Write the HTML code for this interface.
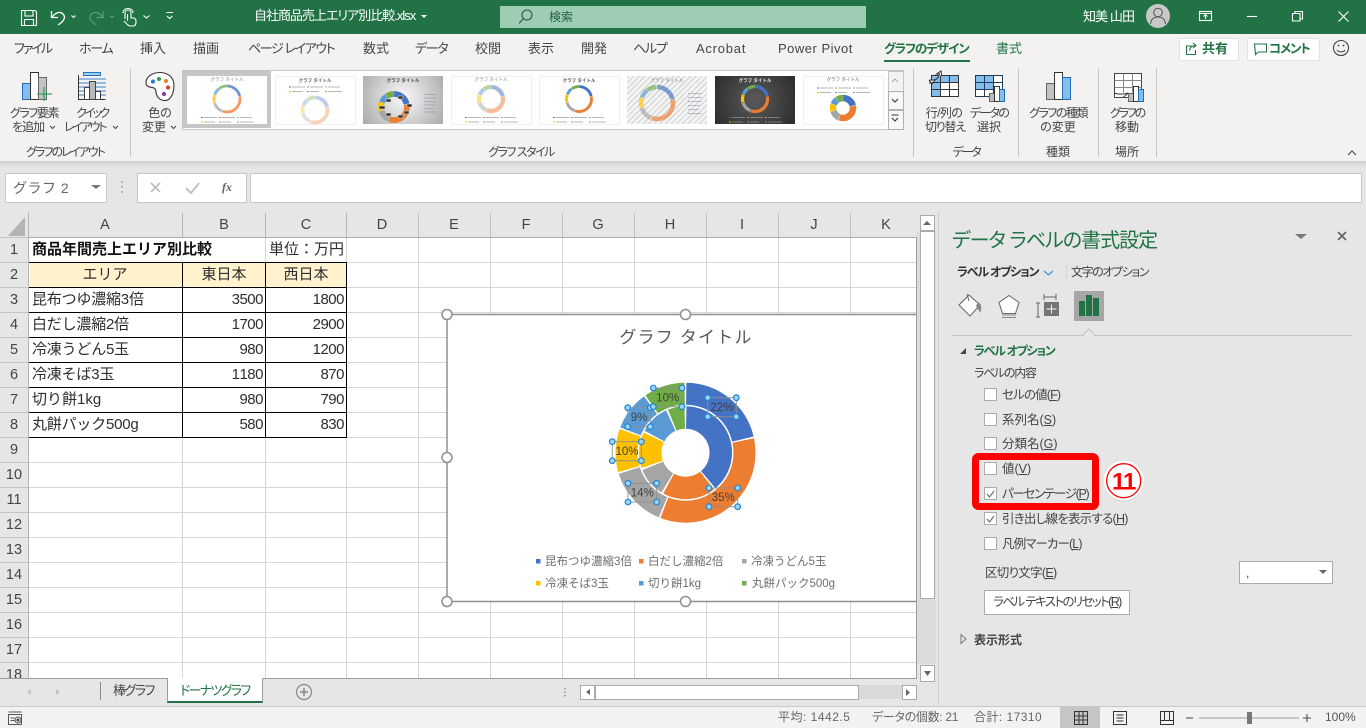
<!DOCTYPE html>
<html lang="ja"><head><meta charset="utf-8"><title>自社商品売上エリア別比較.xlsx - Excel</title>
<style>
html,body{margin:0;padding:0}
body{width:1366px;height:728px;overflow:hidden;position:relative;background:#fff;font-family:"Liberation Sans","Noto Sans CJK JP",sans-serif;color:#444}
.b{position:absolute}
.t{position:absolute;white-space:nowrap;line-height:16px;height:16px;font-size:12px;font-feature-settings:"palt";color:#444}
.c{transform:translateX(-50%)}
.tab{font-size:13px;top:41px}
.w{color:#fff}
.cell{font-size:15px;color:#2e2e2e;font-feature-settings:normal}
.n{font-size:15px;color:#2e2e2e;font-feature-settings:normal;letter-spacing:-.5px;text-align:right;font-kerning:none}
.h{font-size:14.5px;color:#444;font-feature-settings:normal;transform:translateX(-50%)}
.g{color:#217346}
.p{font-size:12.5px;left:1002px}
u{text-underline-offset:1px}
svg{position:absolute;left:0;top:0}
</style></head><body>
<!-- backgrounds -->
<div class="b" style="left:0;top:0;width:1366px;height:34px;background:#217346"></div>
<div class="b" style="left:500px;top:6px;width:366px;height:22px;background:#9fcdb3"></div>
<div class="b" style="left:0;top:34px;width:1366px;height:127px;background:#f3f2f1"></div>
<div class="b" style="left:0;top:161px;width:1366px;height:51px;background:linear-gradient(#cfcfcf,#e6e6e6 7px)"></div>
<div class="b" style="left:5px;top:173px;width:100px;height:28px;background:#fff;border:1px solid #c6c6c6"></div>
<div class="b" style="left:137px;top:173px;width:108px;height:28px;background:#fff;border:1px solid #c6c6c6"></div>
<div class="b" style="left:250px;top:173px;width:1110px;height:28px;background:#fff;border:1px solid #c6c6c6"></div>
<div class="b" style="left:0;top:212px;width:917px;height:25px;background:#e6e6e6;border-bottom:0"></div>
<div class="b" style="left:0;top:237px;width:28px;height:441px;background:#e6e6e6"></div>
<!-- sheet grid -->
<div class="b" style="left:29px;top:237px;width:887px;height:441px;background:repeating-linear-gradient(to bottom,#d6d6d6 0 1px,#fff 1px 25px)"></div>
<div class="b" style="left:182px;top:262px;width:1px;height:416px;background:#d6d6d6"></div>
<div class="b" style="left:265px;top:237px;width:1px;height:441px;background:#d6d6d6"></div>
<div class="b" style="left:346px;top:237px;width:1px;height:441px;background:#d6d6d6"></div>
<div class="b" style="left:418px;top:237px;width:1px;height:441px;background:#d6d6d6"></div>
<div class="b" style="left:490px;top:237px;width:1px;height:441px;background:#d6d6d6"></div>
<div class="b" style="left:562px;top:237px;width:1px;height:441px;background:#d6d6d6"></div>
<div class="b" style="left:634px;top:237px;width:1px;height:441px;background:#d6d6d6"></div>
<div class="b" style="left:706px;top:237px;width:1px;height:441px;background:#d6d6d6"></div>
<div class="b" style="left:778px;top:237px;width:1px;height:441px;background:#d6d6d6"></div>
<div class="b" style="left:850px;top:237px;width:1px;height:441px;background:#d6d6d6"></div>
<div class="b" style="left:916px;top:237px;width:1px;height:441px;background:#9c9c9c"></div>
<div class="b" style="left:30px;top:263px;width:316px;height:24px;background:#fff2cc"></div>
<!-- header separators -->
<div class="b" style="left:28px;top:212px;width:1px;height:466px;background:#b5b5b5"></div>
<div class="b" style="left:29px;top:237px;width:888px;height:1px;background:#ababab"></div>
<div class="b" style="left:182px;top:213px;width:1px;height:24px;background:#b5b5b5"></div>
<div class="b" style="left:265px;top:213px;width:1px;height:24px;background:#b5b5b5"></div>
<div class="b" style="left:346px;top:213px;width:1px;height:24px;background:#b5b5b5"></div>
<div class="b" style="left:418px;top:213px;width:1px;height:24px;background:#c2c2c2"></div>
<div class="b" style="left:490px;top:213px;width:1px;height:24px;background:#c2c2c2"></div>
<div class="b" style="left:562px;top:213px;width:1px;height:24px;background:#c2c2c2"></div>
<div class="b" style="left:634px;top:213px;width:1px;height:24px;background:#c2c2c2"></div>
<div class="b" style="left:706px;top:213px;width:1px;height:24px;background:#c2c2c2"></div>
<div class="b" style="left:778px;top:213px;width:1px;height:24px;background:#c2c2c2"></div>
<div class="b" style="left:850px;top:213px;width:1px;height:24px;background:#c2c2c2"></div>
<!-- row separators in header -->
<div class="b" style="left:0;top:237px;width:28px;height:441px;background:repeating-linear-gradient(to bottom,#c4c4c4 0 1px,transparent 1px 25px)"></div>
<!-- black borders -->
<div class="b" style="left:29px;top:262px;width:318px;height:176px;background:repeating-linear-gradient(to bottom,#000 0 1px,transparent 1px 25px)"></div>
<div class="b" style="left:182px;top:262px;width:1px;height:176px;background:#000"></div>
<div class="b" style="left:265px;top:262px;width:1px;height:176px;background:#000"></div>
<div class="b" style="left:346px;top:262px;width:1px;height:176px;background:#000"></div>
<!-- scrollbars, tabs, status -->
<div class="b" style="left:917px;top:212px;width:21px;height:495px;background:#e6e6e6"></div>
<div class="b" style="left:917px;top:231px;width:19px;height:433px;background:#dcdcdc"></div>
<div class="b" style="left:920px;top:215px;width:13px;height:14px;background:#fff;border:1px solid #ababab"></div>
<div class="b" style="left:920px;top:231px;width:13px;height:366px;background:#fff;border:1px solid #ababab"></div>
<div class="b" style="left:920px;top:665px;width:13px;height:15px;background:#fff;border:1px solid #ababab"></div>
<div class="b" style="left:0;top:678px;width:917px;height:29px;background:#e6e6e6;border-top:1px solid #9c9c9c;box-sizing:border-box"></div>
<div class="b" style="left:938px;top:212px;width:428px;height:495px;background:#e6e6e6;border-left:1px solid #cfcfcf;box-sizing:border-box"></div>
<div class="b" style="left:167px;top:678px;width:96px;height:25px;background:#fff;border-left:1px solid #9c9c9c;border-right:1px solid #9c9c9c;border-bottom:2px solid #217346;box-sizing:border-box"></div>
<div class="b" style="left:100px;top:682px;width:1px;height:18px;background:#8a8a8a"></div>
<div class="b" style="left:580px;top:685px;width:335px;height:14px;background:#d9d9d9"></div>
<div class="b" style="left:580px;top:685px;width:13px;height:13px;background:#fff;border:1px solid #ababab"></div>
<div class="b" style="left:595px;top:685px;width:262px;height:13px;background:#fff;border:1px solid #ababab"></div>
<div class="b" style="left:902px;top:685px;width:13px;height:13px;background:#fff;border:1px solid #ababab"></div>
<div class="b" style="left:0;top:706px;width:1366px;height:22px;background:#f3f2f1;border-top:1px solid #c8c8c8;box-sizing:border-box"></div>
<div class="b" style="left:1060px;top:707px;width:40px;height:21px;background:#c6c5c3"></div>
<!-- gallery -->
<div class="b" style="left:182px;top:70px;width:720px;height:58px;background:#fff;border:1px solid #c6c6c6"></div>
<div class="b" style="left:888px;top:71px;width:14px;height:19px;background:#f3f2f1;border:1px solid #c6c6c6"></div>
<div class="b" style="left:888px;top:91px;width:14px;height:17px;background:#f8f8f8;border:1px solid #b0b0b0"></div>
<div class="b" style="left:888px;top:110px;width:14px;height:18px;background:#f8f8f8;border:1px solid #b0b0b0"></div>
<div class="b" style="left:182px;top:71px;width:89px;height:57px;background:#c6c6c6"></div>
<div class="b" style="left:187px;top:76px;width:80px;height:48px;background:#fff"></div>
<div class="b" style="left:363px;top:76px;width:80px;height:48px;background:radial-gradient(circle at 50% 45%,#fafafa,#a9a9a9)"></div>
<div class="b" style="left:715px;top:76px;width:80px;height:48px;background:radial-gradient(circle at 50% 50%,#5a5a5a,#2c2c2c)"></div>
<div class="b" style="left:627px;top:76px;width:80px;height:48px;background:repeating-linear-gradient(135deg,#dedede 0 2px,#f7f7f7 2px 4px)"></div>
<!-- share buttons -->
<div class="b" style="left:1179px;top:38px;width:58px;height:21px;background:#fff;border:1px solid #e2e2e2;border-radius:2px"></div>
<div class="b" style="left:1247px;top:38px;width:71px;height:21px;background:#fff;border:1px solid #e2e2e2;border-radius:2px"></div>
<!-- pane widgets -->
<div class="b" style="left:1074px;top:291px;width:30px;height:30px;background:#a6a6a6"></div>
<div class="b" style="left:952px;top:335px;width:400px;height:1px;background:#c4c4c4"></div>
<div class="b" style="left:1239px;top:561px;width:92px;height:21px;background:#fff;border:1px solid #ababab"></div>
<div class="b" style="left:984px;top:590px;width:144px;height:23px;background:#fff;border:1px solid #ababab"></div>

<!-- title text -->
<div class="t w" style="left:254px;top:8px;font-size:13px;letter-spacing:-1px">自社商品売上エリア別比較.xlsx</div>
<div class="t" style="left:549px;top:9px;font-size:12px;color:#1d5f3b">検索</div>
<div class="t w" style="left:1083px;top:9px;font-size:13px;letter-spacing:-.9px">知美 山田</div>
<!-- tabs -->
<div class="t tab" style="left:14px;letter-spacing:-2px">ファイル</div>
<div class="t tab" style="left:79px;letter-spacing:-1.300px">ホーム</div>
<div class="t tab" style="left:140px">挿入</div>
<div class="t tab" style="left:193px">描画</div>
<div class="t tab" style="left:248px;letter-spacing:-1.400px">ページ レイアウト</div>
<div class="t tab" style="left:363px">数式</div>
<div class="t tab" style="left:415px;letter-spacing:-1.300px">データ</div>
<div class="t tab" style="left:475px">校閲</div>
<div class="t tab" style="left:528px">表示</div>
<div class="t tab" style="left:581px">開発</div>
<div class="t tab" style="left:633px;letter-spacing:-1.300px">ヘルプ</div>
<div class="t tab" style="left:696px;letter-spacing:.75px">Acrobat</div>
<div class="t tab" style="left:778px;letter-spacing:.5px">Power Pivot</div>
<div class="t tab g" style="left:884px;font-weight:700;font-size:12.5px;letter-spacing:-1.100px">グラフのデザイン</div>
<div class="b" style="left:884px;top:60px;width:86px;height:2px;background:#217346"></div>
<div class="t tab g" style="left:996px">書式</div>
<div class="t g" style="left:1202px;top:41px;font-size:13px;font-weight:700">共有</div>
<div class="t g" style="left:1269px;top:41px;font-size:12.5px;font-weight:700;letter-spacing:-1.200px">コメント</div>
<!-- ribbon labels -->
<div class="t c" style="left:34px;top:105px;letter-spacing:-1.400px">グラフ要素</div>
<div class="t" style="left:12px;top:119px;letter-spacing:-1px">を追加</div>
<div class="t c" style="left:92px;top:105px;letter-spacing:-2.500px">クイック</div>
<div class="t" style="left:64px;top:119px;letter-spacing:-2.200px">レイアウト</div>
<div class="t c" style="left:160px;top:105px">色の</div>
<div class="t" style="left:142px;top:119px">変更</div>
<div class="t c" style="left:65px;top:144px;letter-spacing:-1.900px">グラフのレイアウト</div>
<div class="t c" style="left:521px;top:144px;letter-spacing:-1.500px">グラフ スタイル</div>
<div class="t c" style="left:944px;top:105px;letter-spacing:-.6px">行/列の</div>
<div class="t c" style="left:945px;top:119px;letter-spacing:-1.200px">切り替え</div>
<div class="t c" style="left:989px;top:105px;letter-spacing:-1.700px">データの</div>
<div class="t c" style="left:989px;top:119px">選択</div>
<div class="t c" style="left:1058px;top:105px;letter-spacing:-1.500px">グラフの種類</div>
<div class="t c" style="left:1058px;top:119px">の変更</div>
<div class="t c" style="left:1127px;top:105px;letter-spacing:-2.200px">グラフの</div>
<div class="t c" style="left:1127px;top:119px">移動</div>
<div class="t c" style="left:966px;top:144px;letter-spacing:-2.300px">データ</div>
<div class="t c" style="left:1058px;top:144px">種類</div>
<div class="t c" style="left:1127px;top:144px">場所</div>
<div class="t" style="left:13px;top:180px;font-size:14px;color:#666;font-feature-settings:normal;letter-spacing:.5px">グラフ 2</div>
<!-- column headers -->
<div class="t h" style="left:105px;top:217px">A</div><div class="t h" style="left:224px;top:217px">B</div><div class="t h" style="left:306px;top:217px">C</div><div class="t h" style="left:382px;top:217px">D</div><div class="t h" style="left:454px;top:217px">E</div><div class="t h" style="left:526px;top:217px">F</div><div class="t h" style="left:598px;top:217px">G</div><div class="t h" style="left:670px;top:217px">H</div><div class="t h" style="left:742px;top:217px">I</div><div class="t h" style="left:814px;top:217px">J</div><div class="t h" style="left:886px;top:217px">K</div>
<!-- row headers -->
<div class="t h" style="left:14px;top:242px">1</div><div class="t h" style="left:14px;top:267px">2</div><div class="t h" style="left:14px;top:292px">3</div><div class="t h" style="left:14px;top:317px">4</div><div class="t h" style="left:14px;top:342px">5</div><div class="t h" style="left:14px;top:367px">6</div><div class="t h" style="left:14px;top:392px">7</div><div class="t h" style="left:14px;top:417px">8</div><div class="t h" style="left:14px;top:442px">9</div><div class="t h" style="left:14px;top:467px">10</div><div class="t h" style="left:14px;top:492px">11</div><div class="t h" style="left:14px;top:517px">12</div><div class="t h" style="left:14px;top:542px">13</div><div class="t h" style="left:14px;top:567px">14</div><div class="t h" style="left:14px;top:592px">15</div><div class="t h" style="left:14px;top:617px">16</div><div class="t h" style="left:14px;top:642px">17</div>
<div class="b" style="left:0;top:662px;width:28px;height:16px;overflow:hidden"><div class="t h" style="left:14px;top:5px">18</div></div>
<!-- cells -->
<div class="t cell" style="left:32px;top:242px;font-weight:700;color:#111">商品年間売上エリア別比較</div>
<div class="t cell" style="left:269px;top:242px">単位：万円</div>
<div class="t cell c" style="left:105px;top:267px">エリア</div>
<div class="t cell c" style="left:224px;top:267px">東日本</div>
<div class="t cell c" style="left:306px;top:267px">西日本</div>
<div class="t cell" style="left:32px;top:292px;letter-spacing:-.2px">昆布つゆ濃縮3倍</div>
<div class="t cell" style="left:32px;top:317px;letter-spacing:-.2px">白だし濃縮2倍</div>
<div class="t cell" style="left:32px;top:342px;letter-spacing:-.2px">冷凍うどん5玉</div>
<div class="t cell" style="left:32px;top:367px;letter-spacing:-.2px">冷凍そば3玉</div>
<div class="t cell" style="left:32px;top:392px">切り餅1kg</div>
<div class="t cell" style="left:32px;top:417px;letter-spacing:-.2px">丸餅パック500g</div>
<div class="t n" style="right:1103px;top:292px">3500</div><div class="t n" style="right:1022px;top:292px">1800</div>
<div class="t n" style="right:1103px;top:317px">1700</div><div class="t n" style="right:1022px;top:317px">2900</div>
<div class="t n" style="right:1103px;top:342px">980</div><div class="t n" style="right:1022px;top:342px">1200</div>
<div class="t n" style="right:1103px;top:367px">1180</div><div class="t n" style="right:1022px;top:367px">870</div>
<div class="t n" style="right:1103px;top:392px">980</div><div class="t n" style="right:1022px;top:392px">790</div>
<div class="t n" style="right:1103px;top:417px">580</div><div class="t n" style="right:1022px;top:417px">830</div>
<!-- sheet tabs -->
<div class="t" style="left:113px;top:683px;font-size:13px;letter-spacing:-1.500px">棒グラフ</div>
<div class="t" style="left:180px;top:683px;font-size:13px;color:#217346;letter-spacing:-1.700px">ドーナツグラフ</div>
<!-- status -->
<div class="t" style="left:778px;top:709px;color:#666;letter-spacing:.5px">平均: 1442.5</div>
<div class="t" style="left:872px;top:709px;color:#666;letter-spacing:-.3px">データの個数: 21</div>
<div class="t" style="left:974px;top:709px;color:#666;letter-spacing:.45px">合計: 17310</div>
<div class="t" style="left:1325px;top:709px;color:#555">100%</div>
<!-- pane text -->
<div class="t g" style="left:952px;top:233px;font-size:20px;font-weight:400;letter-spacing:-1px">データ ラベルの書式設定</div>
<div class="t" style="left:957px;top:264px;font-weight:700;color:#333;letter-spacing:-1.200px">ラベル オプション</div>
<div class="t" style="left:1071px;top:264px;color:#444;letter-spacing:-1.400px">文字のオプション</div>
<div class="t g" style="left:974px;top:343px;font-weight:700;letter-spacing:-1.300px">ラベル オプション</div>
<div class="t" style="left:974px;top:365px;letter-spacing:-1.300px">ラベルの内容</div>
<div class="t p" style="top:387px;letter-spacing:-.85px">セルの値(<u>F</u>)</div>
<div class="t p" style="top:412px">系列名(<u>S</u>)</div>
<div class="t p" style="top:436px">分類名(<u>G</u>)</div>
<div class="t p" style="top:461px">値(<u>V</u>)</div>
<div class="t p" style="top:486px;letter-spacing:-1.300px">パーセンテージ(<u>P</u>)</div>
<div class="t p" style="top:511px;letter-spacing:-.75px">引き出し線を表示する(<u>H</u>)</div>
<div class="t p" style="top:536px;letter-spacing:-.9px">凡例マーカー(<u>L</u>)</div>
<div class="t" style="left:985px;top:565px;font-size:12.5px;letter-spacing:-.7px">区切り文字(<u>E</u>)</div>
<div class="t" style="left:1246px;top:565px;font-size:12px">,</div>
<div class="t" style="left:993px;top:594px;font-size:12.5px;letter-spacing:-1.600px">ラベル テキストのリセット(<u>R</u>)</div>
<div class="t" style="left:974px;top:632px;font-weight:700">表示形式</div>

<svg width="1366" height="728" viewBox="0 0 1366 728" xmlns="http://www.w3.org/2000/svg" font-family="'Liberation Sans','Noto Sans CJK JP',sans-serif">
<defs>
<g id="rg" fill="none" transform="rotate(-90)">
<circle r="10" pathLength="100" stroke="#4472c4" stroke-dasharray="21 100" stroke-dashoffset="-.2"/>
<circle r="10" pathLength="100" stroke="#ed7d31" stroke-dasharray="34 100" stroke-dashoffset="-21.7"/>
<circle r="10" pathLength="100" stroke="#a5a5a5" stroke-dasharray="13.8 100" stroke-dashoffset="-56.3"/>
<circle r="10" pathLength="100" stroke="#ffc000" stroke-dasharray="10 100" stroke-dashoffset="-70.6"/>
<circle r="10" pathLength="100" stroke="#5b9bd5" stroke-dasharray="9 100" stroke-dashoffset="-81"/>
<circle r="10" pathLength="100" stroke="#70ad47" stroke-dasharray="9.5 100" stroke-dashoffset="-90.4"/>
</g>
<g id="lg">
<path d="M0 0h2" stroke="#4472c4"/><path d="M3 0h13" stroke="#999" stroke-width=".7"/>
<path d="M18 0h2" stroke="#ed7d31"/><path d="M21 0h13" stroke="#999" stroke-width=".7"/>
<path d="M36 0h2" stroke="#a5a5a5"/><path d="M39 0h12" stroke="#999" stroke-width=".7"/>
<path d="M0 4.500h2" stroke="#ffc000"/><path d="M3 4.500h11" stroke="#999" stroke-width=".7"/>
<path d="M18 4.500h2" stroke="#5b9bd5"/><path d="M21 4.500h9" stroke="#999" stroke-width=".7"/>
<path d="M36 4.500h2" stroke="#70ad47"/><path d="M39 4.500h14" stroke="#999" stroke-width=".7"/>
</g>
<g id="lv">
<path d="M0 0h2M0 5h2M0 10h2M0 15h2M0 20h2M0 25h2" stroke="#6a8fc8"/>
<path d="M3 0h14M3 5h14M3 10h14M3 15h12M3 20h10M3 25h14" stroke="#888" stroke-width=".7"/>
</g>
<g id="hd" fill="#9fd3f2" stroke="#1f86d1" stroke-width="1.200"><circle r="2.800"/></g>
</defs>

<!-- QAT -->
<g fill="none" stroke="#fff" stroke-width="1.100">
<path d="M21.500 10.500h13.500l1.500 1.500v13.500h-15z"/><path d="M25 10.500v5.500h8v-5.500M24.500 25.500v-6h9v6"/>
<path d="M51.500 11v6.500h6.500" stroke-width="1.300"/><path d="M52 17.500c3-5 8-6.500 11-3.500 3 3 1.500 7-5 11" stroke-width="1.300"/>
<path d="M71.500 15.500l2 2 2-2"/><path d="M143.500 15.500l3 2.500 3-2.500"/><path d="M166.500 12.500h6.500M167 16l2.700 2.500 2.700-2.500"/>
<path d="M125 19v-6c0-4 6-4 6 0v5h2c3 0 3 2 3 4 0 3-1 4-3 4h-3c-2 0-4-3-6-5"/><path d="M127.500 14v7"/><path d="M123 13c0-6 10-6 10 0"/>
</g>
<g fill="none" stroke="#5e9a7b" stroke-width="1.200"><path d="M103 11v6.500h-6.500M102.500 17.500c-3-5-8-6.500-11-3.500-3 3-1.500 7 5 11"/><path d="M110 15.500l2 2 2-2"/></g>
<path d="M421 15h6l-3 3z" fill="#fff"/>
<!-- search -->
<g fill="none" stroke="#1d5f3b" stroke-width="1.100"><circle cx="527" cy="15" r="5"/><path d="M523.500 18.500l-4.500 5"/></g>
<!-- window controls -->
<circle cx="1158" cy="16" r="12" fill="#c8c8c8"/>
<g fill="none" stroke="#555" stroke-width="1"><circle cx="1158" cy="12.500" r="4.300"/><path d="M1150.500 24c.5-5 3-7 7.500-7s7 2 7.500 7"/></g>
<g fill="none" stroke="#fff" stroke-width="1.100"><rect x="1199.500" y="11.500" width="12" height="9"/><path d="M1199.500 13.500h12M1205.500 19v-4M1203.500 16.500l2-2 2 2"/>
<path d="M1247 16.500h10"/><path d="M1292.500 13.500h7.500v7.500h-7.500zM1295 13.500v-2h7.500v7.500H1300"/><path d="M1338.500 11.500l10 10M1348.500 11.500l-10 10" stroke-width="1.200"/></g>
<!-- share icons -->
<g fill="none" stroke="#217346" stroke-width="1.100"><path d="M1192 46h-5.500v8.500h9V50"/><path d="M1189.500 50.500c.5-4 3-5 6.500-5M1193 43l3 2.500-3 2.500"/><path d="M1254.500 44h12v8h-8.500l-2.500 2.500z"/></g>
<g fill="none" stroke="#444" stroke-width="1.100"><circle cx="1341" cy="48" r="7.500"/><path d="M1337 50c1.500 2.500 6.500 2.500 8 0"/></g><circle cx="1338.500" cy="45.500" r=".9" fill="#444"/><circle cx="1343.500" cy="45.500" r=".9" fill="#444"/>
<!-- group separators -->
<path d="M130.500 68v89M913.500 68v89M1018.500 68v89M1098.500 68v89M1156.500 68v89" stroke="#c8c6c4"/>
<path d="M1348 155l4-4 4 4" fill="none" stroke="#444" stroke-width="1.100"/>
<!-- graph element -->
<rect x="22.500" y="83.500" width="8" height="16" fill="#85bdee" stroke="#1f6fb5"/>
<rect x="30.500" y="72.500" width="8" height="27" fill="#fff" stroke="#333"/>
<rect x="38.500" y="77.500" width="8" height="22" fill="#c3c3c3" stroke="#666"/>
<path d="M44 87v14M37 94h15" stroke="#2ea55a" stroke-width="1.300"/>
<!-- quick layout -->
<rect x="83.500" y="72.500" width="17" height="3" fill="#9ed0f0" stroke="#2273c0"/>
<path d="M79 79h27M79 83h27M79 87h27M79 91h27M79 95h27" stroke="#3b83c4"/>
<path d="M78.500 75v24.500h27" fill="none" stroke="#333"/>
<rect x="84.500" y="87.500" width="5" height="12" fill="#fff" stroke="#444"/><rect x="89.500" y="81.500" width="6" height="18" fill="#b9b9b9" stroke="#444"/><rect x="95.500" y="91.500" width="5" height="8" fill="#fff" stroke="#444"/>
<path d="M113 126l2.500 2.500 2.500-2.500" fill="none" stroke="#444"/>
<path d="M50 126l2.500 2.500 2.500-2.500" fill="none" stroke="#444"/>
<path d="M171 126l2.500 2.500 2.500-2.500" fill="none" stroke="#444"/>
<!-- palette -->
<path d="M160 72.500c-8 0-14 4.500-14 10 0 5 5 4.500 8 5.500 3 1.500 1 5 3.500 8.500 2.500 4 7.500 5 11 3 4-3 5.500-9 5.500-14 0-8-6-13-14-13z" fill="#fff" stroke="#333" stroke-width="1.100"/>
<circle cx="153" cy="81.500" r="2.100" fill="#2a7fd0"/><circle cx="159" cy="79" r="2.100" fill="#2fa24f"/><circle cx="166" cy="81" r="2.100" fill="#ed7d31"/><circle cx="168" cy="87.500" r="2.100" fill="#e03c31"/><circle cx="164" cy="94" r="2.100" fill="#8e3ba8"/>
<!-- gallery thumbs -->
<path d="M275.500 76.500h80v48h-80zM451.500 76.500h80v48h-80zM539.500 76.500h80v48h-80zM803.500 76.500h80v48h-80z" fill="none" stroke="#f0f0f0"/>
<g font-size="4.500" text-anchor="middle" fill="#8a8a8a">
<text x="227" y="81">グラフ タイトル</text><text x="315" y="82" font-weight="700" fill="#666">グラフ タイトル</text><text x="403" y="82" font-weight="700" fill="#444">グラフ タイトル</text><text x="491" y="81">グラフ タイトル</text><text x="579" y="82" font-weight="700" fill="#555">グラフ タイトル</text><text x="667" y="82">グラフ タイトル</text><text x="755" y="82" font-weight="700" fill="#eee">グラフ タイトル</text><text x="843" y="81" fill="#666">グラフ タイトル</text>
</g>
<use href="#rg" transform="translate(227 99) scale(1.300)" stroke-width="2.200" opacity=".75"/>
<use href="#rg" transform="translate(315 110) scale(1.250)" stroke-width="3" opacity=".35"/>
<use href="#rg" transform="translate(394 107) scale(1.300)" stroke-width="4.500"/>
<use href="#rg" transform="translate(491 99) scale(1.200)" stroke-width="3.500" opacity=".5"/>
<use href="#rg" transform="translate(579 99) scale(1.250)" stroke-width="2.300"/>
<use href="#rg" transform="translate(657 103) scale(1.600)" stroke-width="2.800" opacity=".65"/>
<use href="#rg" transform="translate(755 99) scale(1.250)" stroke-width="2.600"/>
<use href="#rg" transform="translate(843 108) scale(1)" stroke-width="6.500"/>
<use href="#lg" transform="translate(201 117.500)"/><use href="#lg" transform="translate(289 87)"/><use href="#lv" transform="translate(424 94.500) scale(.72 .7)"/><use href="#lg" transform="translate(465 117.500)"/><use href="#lg" transform="translate(553 117.500)"/><use href="#lv" transform="translate(688 93.500) scale(.8 .8)"/><use href="#lg" transform="translate(729 117.500)"/><use href="#lg" transform="translate(817 88)"/>
<path d="M386 99h5v3h-5zM398 96h5v3h-5zM407 104h5v3h-5zM379 106h6v3h-6zM386 113h5v3h-5zM398 115h5v3h-5zM404 111h5v3h-5z" fill="#333" stroke="#eee" stroke-width=".5"/>
<path d="M892 82l3-3 3 3" fill="none" stroke="#aaa" stroke-width="1.100"/>
<path d="M892 99l3 3 3-3" fill="none" stroke="#333" stroke-width="1.100"/>
<path d="M891.500 115h7M892 118l3 3 3-3" fill="none" stroke="#333" stroke-width="1.100"/>
<!-- switch row/col -->
<path d="M931.500 75.500h27v21h-27z" fill="#fff"/>
<path d="M931.500 75.500h27v7h-18v14h-9z" fill="#84bcec"/>
<path d="M931.500 75.500h27v21h-27zM931.500 82.500h27M931.500 89.500h27M940.500 75.500v21M949.500 75.500v21" fill="none" stroke="#333"/>
<path d="M930 84v-4l3.500 0c3 0 5-2 6-6h-3l4.500-3 .5 4" fill="#f3f2f1" stroke="#333"/>
<path d="M929 80l3 4 3-4" fill="none" stroke="#333"/>
<!-- data select -->
<path d="M975.500 75.500h27v21h-27z" fill="#fff"/><path d="M975.500 75.500h18v14h-18z" fill="#84bcec"/>
<path d="M975.500 75.500h27v21h-27zM975.500 82.500h27M975.500 89.500h27M984.500 75.500v21M993.500 75.500v21" fill="none" stroke="#1f3d5a"/>
<rect x="989.500" y="93.500" width="5" height="8" fill="#bdbdbd" stroke="#666"/><rect x="994.500" y="86.500" width="5" height="15" fill="#fff" stroke="#333"/><rect x="999.500" y="89.500" width="5" height="12" fill="#85bdee" stroke="#1f6fb5"/>
<!-- chart type -->
<rect x="1046.500" y="83.500" width="8" height="16" fill="#c3c3c3" stroke="#666"/><rect x="1054.500" y="72.500" width="8" height="27" fill="#fff" stroke="#333"/><rect x="1062.500" y="77.500" width="8" height="22" fill="#85bdee" stroke="#1f6fb5"/>
<!-- move chart -->
<path d="M1114.500 73.500h27v22l-6 2h-21z" fill="#fff" stroke="#444"/><path d="M1114.500 80.500h27M1114.500 87.500h27M1123.500 73.500v19M1132.500 73.500v19" stroke="#888" fill="none"/>
<path d="M1114.500 93c4 2 10 1 14 0l-5 4" fill="none" stroke="#333"/>
<rect x="1128.500" y="93.500" width="5" height="8" fill="#bdbdbd" stroke="#666"/><rect x="1133.500" y="86.500" width="5" height="15" fill="#fff" stroke="#333"/><rect x="1138.500" y="89.500" width="5" height="12" fill="#85bdee" stroke="#1f6fb5"/>
<!-- formula bar -->
<path d="M91 185h10l-5 4z" fill="#777"/>
<path d="M122 181v2M122 186v2M122 191v2" stroke="#999" stroke-width="1.300"/>
<path d="M151 183l9 9M160 183l-9 9" stroke="#bbb" stroke-width="1.600"/>
<path d="M186 188l5 5 8-10" fill="none" stroke="#bbb" stroke-width="1.800"/>
<text x="222" y="191" font-family="'Liberation Serif',serif" font-style="italic" font-weight="700" font-size="12" fill="#666">fx</text>
<!-- corner -->
<path d="M25 217v19h-17z" fill="#b4b4b4"/>
<!-- chart -->
<rect x="447" y="314.500" width="469" height="287" fill="#fff"/>
<path d="M916 314.500H447v287h469" fill="none" stroke="#8f8f8f" stroke-width="1.500"/>
<text x="686" y="343" font-size="17" text-anchor="middle" fill="#595959" letter-spacing="1.200">グラフ タイトル</text>
<g fill="none" transform="translate(685.500 452.700) rotate(-90)">
<g stroke-width="22">
<circle r="59" pathLength="100" stroke="#4472c4" stroke-dasharray="21.100 100" stroke-dashoffset="-.2"/>
<circle r="59" pathLength="100" stroke="#ed7d31" stroke-dasharray="34.200 100" stroke-dashoffset="-21.700"/>
<circle r="59" pathLength="100" stroke="#a5a5a5" stroke-dasharray="13.900 100" stroke-dashoffset="-56.300"/>
<circle r="59" pathLength="100" stroke="#ffc000" stroke-dasharray="10 100" stroke-dashoffset="-70.600"/>
<circle r="59" pathLength="100" stroke="#5b9bd5" stroke-dasharray="9 100" stroke-dashoffset="-81"/>
<circle r="59" pathLength="100" stroke="#70ad47" stroke-dasharray="9.500 100" stroke-dashoffset="-90.400"/>
</g>
<g stroke-width="22.500">
<circle r="35.250" pathLength="100" stroke="#4472c4" stroke-dasharray="38.500 100" stroke-dashoffset="-.35"/>
<circle r="35.250" pathLength="100" stroke="#ed7d31" stroke-dasharray="18.400 100" stroke-dashoffset="-39.550"/>
<circle r="35.250" pathLength="100" stroke="#a5a5a5" stroke-dasharray="10.300 100" stroke-dashoffset="-58.650"/>
<circle r="35.250" pathLength="100" stroke="#ffc000" stroke-dasharray="12.500 100" stroke-dashoffset="-69.650"/>
<circle r="35.250" pathLength="100" stroke="#5b9bd5" stroke-dasharray="10.300 100" stroke-dashoffset="-82.850"/>
<circle r="35.250" pathLength="100" stroke="#70ad47" stroke-dasharray="5.800 100" stroke-dashoffset="-93.850"/>
</g>
</g>
<g fill="none" stroke="#8f8f8f" stroke-width=".9">
<rect x="707.700" y="397.700" width="28.600" height="19"/><rect x="709" y="488" width="28.700" height="18.700"/><rect x="628" y="483.300" width="28.700" height="18.700"/><rect x="612.300" y="441.700" width="29" height="19"/><rect x="627.700" y="407.700" width="22.600" height="19"/><rect x="653.300" y="388" width="28.700" height="18.700"/>
</g>
<g font-size="11.500" fill="#404040" text-anchor="middle">
<text x="722" y="411">22%</text><text x="723.300" y="501">35%</text><text x="642.300" y="496.500">14%</text><text x="627" y="455">10%</text><text x="639" y="421">9%</text><text x="667.700" y="401.500">10%</text>
</g>
<use href="#hd" x="707.700" y="397.700"/><use href="#hd" x="736.300" y="397.700"/><use href="#hd" x="707.700" y="416.700"/><use href="#hd" x="736.300" y="416.700"/>
<use href="#hd" x="709" y="488"/><use href="#hd" x="737.700" y="488"/><use href="#hd" x="709" y="506.700"/><use href="#hd" x="737.700" y="506.700"/>
<use href="#hd" x="628" y="483.300"/><use href="#hd" x="656.700" y="483.300"/><use href="#hd" x="628" y="502"/><use href="#hd" x="656.700" y="502"/>
<use href="#hd" x="612.300" y="441.700"/><use href="#hd" x="641.300" y="441.700"/><use href="#hd" x="612.300" y="460.700"/><use href="#hd" x="641.300" y="460.700"/>
<use href="#hd" x="627.700" y="407.700"/><use href="#hd" x="650.300" y="407.700"/><use href="#hd" x="627.700" y="426.700"/><use href="#hd" x="650.300" y="426.700"/>
<use href="#hd" x="653.300" y="388"/><use href="#hd" x="682" y="388"/><use href="#hd" x="653.300" y="406.700"/><use href="#hd" x="682" y="406.700"/>
<!-- legend -->
<rect x="536" y="559" width="4.500" height="4.500" fill="#4472c4"/><rect x="639" y="559" width="4.500" height="4.500" fill="#ed7d31"/><rect x="742" y="559" width="4.500" height="4.500" fill="#a5a5a5"/>
<rect x="536" y="581" width="4.500" height="4.500" fill="#ffc000"/><rect x="639" y="581" width="4.500" height="4.500" fill="#5b9bd5"/><rect x="742" y="581" width="4.500" height="4.500" fill="#70ad47"/>
<g font-size="11.500" fill="#6e6e6e">
<text x="545" y="565">昆布つゆ濃縮3倍</text><text x="648" y="565">白だし濃縮2倍</text><text x="751" y="565">冷凍うどん5玉</text>
<text x="545" y="587">冷凍そば3玉</text><text x="648" y="587">切り餅1kg</text><text x="752" y="587">丸餅パック500g</text>
</g>
<g fill="#fff" stroke="#8f8f8f" stroke-width="1.500">
<circle cx="447" cy="314.500" r="5"/><circle cx="685.500" cy="314.500" r="5"/><circle cx="447" cy="457.500" r="5"/><circle cx="447" cy="601.500" r="5"/><circle cx="685.500" cy="601.500" r="5"/>
</g>
<!-- scrollbar arrows -->
<path d="M923 225l4-4 4 4z" fill="#666"/><path d="M924 671h7l-3.500 5z" fill="#666"/><path d="M590 689v6l-4-3z" fill="#666"/><path d="M906 689v7l4-3.500z" fill="#666"/>
<path d="M565 688v1.500M565 691.500v1.500M565 695v1.500" stroke="#888" stroke-width="1.300"/>
<path d="M31 689v6l-4-3z" fill="#c0c0c0"/><path d="M56 689v6l4-3z" fill="#c0c0c0"/>
<g fill="none" stroke="#8a8a8a" stroke-width="1.200"><circle cx="304" cy="692" r="7.500"/><path d="M300 692h8M304 688v8" stroke-width="1.600"/></g>
<!-- status icons -->
<g fill="none" stroke="#555"><path d="M8.500 712h13M8.500 714.500h13v10h-13zM10.500 718h4M10.500 720.500h4"/><circle cx="18" cy="720" r="3"/></g><circle cx="18" cy="720" r="1.500" fill="#444"/>
<g fill="none" stroke="#333"><path d="M1074.500 711.500h13v13h-13zM1074.500 716h13M1074.500 720h13M1079 711.500v13M1083 711.500v13"/><path d="M1113.500 711.500h13v13h-13zM1116.500 715h7M1116.500 718h7M1116.500 721h7"/><path d="M1160.500 711.500h13v13h-13zM1160.500 720.500h13M1164.500 711.500v9M1169.500 711.500v9"/></g>
<path d="M1199 718h100" stroke="#999" fill="none"/>
<path d="M1186 718h7M1303 718h8M1307 714v8" stroke="#444" fill="none"/>
<rect x="1247" y="712" width="5" height="12" fill="#777"/>
<!-- pane icons -->
<path d="M1295 234h12l-6 5z" fill="#777"/>
<path d="M1338 232l8 8M1346 232l-8 8" stroke="#666" stroke-width="1.800"/>
<path d="M1044 271l4.500 4 4.500-4" fill="none" stroke="#3a96dd" stroke-width="1.200"/>
<path d="M1066.500 265v14" stroke="#d0d0d0"/>
<path d="M969 295l11 10-10 11-11-11z" fill="#fff" stroke="#666"/><path d="M967 294l2 7" stroke="#666"/><path d="M978 302c4 2 4 7 2 11-1-3-3-5-4-7z" fill="#888"/>
<path d="M1009 295.500l10 7-3.500 11h-13l-3.500-11z" fill="#fff" stroke="#666"/><path d="M1002 315h14M1002 317.500h14" stroke="#888"/>
<path d="M1044 297h12M1044 294v6M1056 294v6M1038 303v14M1036 303h4M1036 317h4" stroke="#666" fill="none"/>
<rect x="1044" y="302" width="15" height="14" fill="#757575"/><path d="M1046.500 309h10M1051.500 304.500v9" stroke="#fff" stroke-width=".9"/>
<path d="M1079 301h6v15h-6zM1086 295h6v21h-6zM1093 298h6v18h-6z" fill="#217346"/>
<path d="M1083 335l6-6 6 6" fill="#e6e6e6" stroke="#c4c4c4"/><path d="M1084 335.500h10" stroke="#e6e6e6"/>
<path d="M960 354h6v-6z" fill="#444"/>
<path d="M961 634.500v9l5-4.500z" fill="#e6e6e6" stroke="#777"/>
<g fill="#fff" stroke="#ababab" stroke-width="1"><rect x="984.500" y="388.500" width="12" height="12"/><rect x="984.500" y="413.500" width="12" height="12"/><rect x="984.500" y="437.500" width="12" height="12"/><rect x="984.500" y="462.500" width="12" height="12"/><rect x="984.500" y="487.500" width="12" height="12"/><rect x="984.500" y="512.500" width="12" height="12"/><rect x="984.500" y="537.500" width="12" height="12"/></g>
<path d="M987 494l2.500 3 4.500-6M987 519l2.500 3 4.500-6" fill="none" stroke="#777" stroke-width="1.300"/>
<path d="M1319 570h8l-4 4z" fill="#666"/>
<!-- red highlight -->
<rect x="975.500" y="456.500" width="120" height="50" rx="3" fill="none" stroke="#f00" stroke-width="7"/>
<circle cx="1123.700" cy="481.500" r="20" fill="#000" opacity=".12"/>
<circle cx="1123.700" cy="480.700" r="20" fill="#fff"/>
<circle cx="1123.700" cy="480.700" r="17" fill="none" stroke="#f00" stroke-width="1.300"/>
<text x="1123.700" y="489.500" text-anchor="middle" font-size="24" font-weight="700" fill="#f00" letter-spacing="-1" font-family="'Liberation Sans',sans-serif">11</text>
</svg>
</body></html>
